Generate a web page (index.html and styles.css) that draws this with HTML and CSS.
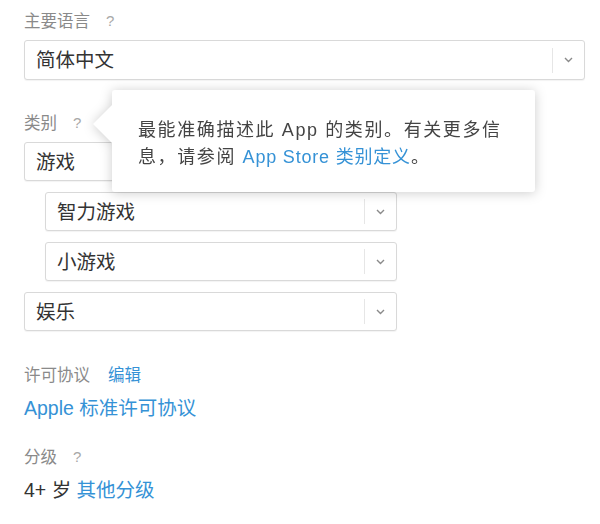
FILE: index.html
```html
<!DOCTYPE html>
<html lang="zh-CN">
<head>
<meta charset="utf-8">
<title>App 信息</title>
<link rel="stylesheet" href="styles.css">
</head>
<body>
<div class="page">
  <section class="field">
    <div class="label">主要语言<span class="help">?</span></div>
    <div class="select wide">
      <span class="value">简体中文</span>
      <span class="caret"><svg width="9" height="6" viewBox="0 0 9 6"><path d="M1 1 L4.5 4.5 L8 1" fill="none" stroke="#8a8a8a" stroke-width="1.4"/></svg></span>
    </div>
  </section>

  <section class="field category">
    <div class="label">类别<span class="help">?</span></div>
    <div class="popover">
      <p>最能准确描述此 App 的类别。有关更多信<br>息，请参阅 <a class="link" href="#">App Store 类别定义</a>。</p>
    </div>
    <div class="select-list">
      <div class="select">
        <span class="value">游戏</span>
        <span class="caret"><svg width="9" height="6" viewBox="0 0 9 6"><path d="M1 1 L4.5 4.5 L8 1" fill="none" stroke="#8a8a8a" stroke-width="1.4"/></svg></span>
      </div>
      <div class="select sub">
        <span class="value">智力游戏</span>
        <span class="caret"><svg width="9" height="6" viewBox="0 0 9 6"><path d="M1 1 L4.5 4.5 L8 1" fill="none" stroke="#8a8a8a" stroke-width="1.4"/></svg></span>
      </div>
      <div class="select sub">
        <span class="value">小游戏</span>
        <span class="caret"><svg width="9" height="6" viewBox="0 0 9 6"><path d="M1 1 L4.5 4.5 L8 1" fill="none" stroke="#8a8a8a" stroke-width="1.4"/></svg></span>
      </div>
      <div class="select">
        <span class="value">娱乐</span>
        <span class="caret"><svg width="9" height="6" viewBox="0 0 9 6"><path d="M1 1 L4.5 4.5 L8 1" fill="none" stroke="#8a8a8a" stroke-width="1.4"/></svg></span>
      </div>
    </div>
  </section>

  <section class="field license">
    <div class="label">许可协议<a class="link edit" href="#">编辑</a></div>
    <div class="text"><a class="link" href="#">Apple 标准许可协议</a></div>
  </section>

  <section class="field rating">
    <div class="label">分级<span class="help">?</span></div>
    <div class="text">4+ 岁 <a class="link" href="#">其他分级</a></div>
  </section>
</div>
</body>
</html>
```
FILE: styles.css
```css
html, body {
  margin: 0;
  padding: 0;
  background: #ffffff;
}

body {
  font-family: "Liberation Sans", "Noto Sans CJK SC", sans-serif;
  color: #333333;
}

.page {
  padding: 10px 0 0 24px;
  width: 561px;
}

.field {
  display: flex;
  flex-direction: column;
}

.label {
  font-size: 16.5px;
  line-height: 22px;
  height: 22px;
  color: #8a8a8a;
  display: flex;
  align-items: center;
}

.help {
  margin-left: 16px;
  font-size: 15px;
  color: #a8a8a8;
}

.link {
  color: #3592d6;
  text-decoration: none;
}

.edit {
  margin-left: 18px;
}

.select {
  margin-top: 8px;
  height: 39px;
  box-sizing: border-box;
  border: 1px solid #d9d9d9;
  border-radius: 3px;
  box-shadow: 0 1px 1px rgba(0, 0, 0, 0.05);
  background: #ffffff;
  display: flex;
  align-items: center;
  width: 373px;
}

.select.wide {
  width: 561px;
  height: 40px;
}

.value {
  flex: 1;
  padding-left: 11px;
  font-size: 19.5px;
  line-height: 26px;
  color: #333333;
}

.caret {
  width: 31px;
  height: 25px;
  border-left: 1px solid #e6e6e6;
  display: flex;
  align-items: center;
  justify-content: center;
}

.category {
  margin-top: 32px;
  position: relative;
}

.select-list {
  display: flex;
  flex-direction: column;
  margin-top: 8px;
  gap: 11px;
}

.select-list .select {
  margin-top: 0;
}

.select.sub {
  margin-left: 21px;
  width: 352px;
}

.popover {
  position: absolute;
  left: 88px;
  top: -22px;
  width: 423px;
  height: 102px;
  box-sizing: border-box;
  background: #ffffff;
  border-radius: 3px;
  padding: 27px 10px 0 26px;
  filter: drop-shadow(0 1px 6px rgba(0, 0, 0, 0.2));
  z-index: 2;
}

.popover::before {
  content: "";
  position: absolute;
  left: -19px;
  top: 14px;
  width: 20px;
  height: 40px;
  background: #ffffff;
  clip-path: polygon(100% 0, 0 50%, 100% 100%);
}

.popover p {
  margin: 0;
  font-size: 18px;
  line-height: 27px;
  letter-spacing: 1.6px;
  color: #444444;
  white-space: nowrap;
}

.popover .link {
  letter-spacing: 0.8px;
}

.license {
  margin-top: 33px;
}

.rating {
  margin-top: 25px;
}

.text {
  margin-top: 9px;
  font-size: 19.5px;
  line-height: 26px;
  color: #333333;
}
```
